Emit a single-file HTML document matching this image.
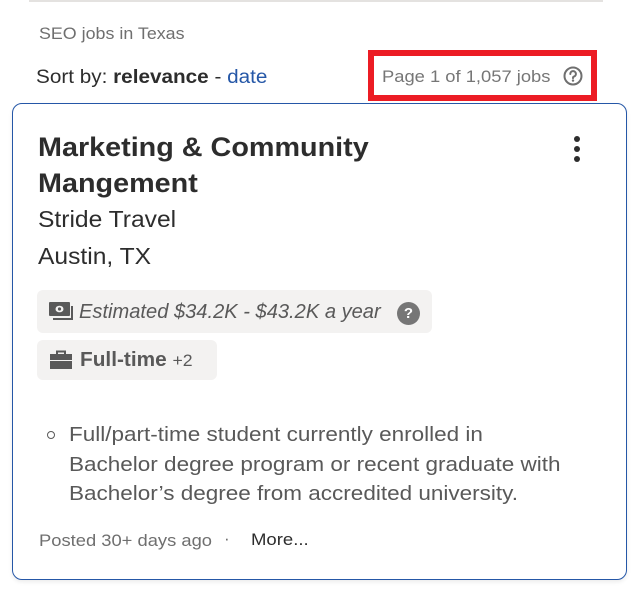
<!DOCTYPE html>
<html><head><meta charset="utf-8"><style>
*{margin:0;padding:0;box-sizing:border-box}
body{width:641px;height:594px;background:#fff;position:relative;overflow:hidden;font-family:"Liberation Sans","DejaVu Sans",sans-serif;color:#2d2d2d}
.a{position:absolute;white-space:nowrap;transform-origin:0 0}
</style></head><body>
<div class="a" style="left:29px;top:0;width:574px;height:2px;background:#e4e2e0"></div>
<div class="a" style="left:39px;top:24px;font-size:17px;color:#6f6f6f;transform:scaleX(1.05)">SEO jobs in Texas</div>
<div class="a" style="left:36px;top:67px;font-size:19px;color:#2d2d2d;transform:scaleX(1.09)">Sort by: <b>relevance</b> - <span style="color:#2557a7">date</span></div>
<div class="a" style="left:368px;top:50px;width:229px;height:51px;border:6px solid #ec1c24"></div>
<div class="a" style="left:382px;top:67px;font-size:17px;color:#767676;transform:scaleX(1.08)">Page 1 of 1,057 jobs</div>
<svg class="a" style="left:562px;top:65px" width="22" height="22" viewBox="0 0 22 22"><circle cx="11" cy="11" r="8.5" fill="none" stroke="#6f6f6f" stroke-width="2"/><path d="M8.3 9a2.8 2.8 0 1 1 3.6 2.6c-.7.3-.9.7-.9 1.5" fill="none" stroke="#6f6f6f" stroke-width="2" stroke-linecap="round"/><circle cx="11" cy="15.6" r="1.2" fill="#6f6f6f"/></svg>
<div class="a" style="left:12px;top:103px;width:615px;height:477px;border:1px solid #2557a7;border-radius:10px;box-shadow:0 2px 4px rgba(0,0,0,.08)"></div>
<div class="a" style="left:38px;top:129px;font-size:27px;font-weight:bold;line-height:36px;color:#2d2d2d;transform:scaleX(1.065)">Marketing &amp; Community<br>Mangement</div>
<div class="a" style="left:574px;top:136px;width:6px;height:6px;border-radius:50%;background:#2d2d2d"></div>
<div class="a" style="left:574px;top:146px;width:6px;height:6px;border-radius:50%;background:#2d2d2d"></div>
<div class="a" style="left:574px;top:156px;width:6px;height:6px;border-radius:50%;background:#2d2d2d"></div>
<div class="a" style="left:38px;top:204px;font-size:23px;line-height:30px;transform:scaleX(1.07)">Stride Travel</div>
<div class="a" style="left:38px;top:241px;font-size:23px;line-height:30px;transform:scaleX(1.07)">Austin, TX</div>
<div class="a" style="left:37px;top:290px;width:395px;height:43px;background:#f3f2f1;border-radius:6px"></div>
<svg class="a" style="left:49px;top:302px" width="25" height="20" viewBox="0 0 25 20"><rect x="0" y="0" width="21" height="14" rx="1" fill="#595959"/><ellipse cx="10.5" cy="7" rx="4" ry="3.3" fill="#f3f2f1"/><circle cx="10.5" cy="7" r="1.6" fill="#595959"/><path d="M23 4v13H4" fill="none" stroke="#595959" stroke-width="2"/></svg>
<div class="a" style="left:79px;top:301px;font-size:20px;font-style:italic;color:#595959;transform:scaleX(1.005)">Estimated $34.2K - $43.2K a year</div>
<div class="a" style="left:397px;top:302px;width:23px;height:23px;border-radius:50%;background:#767676;color:#fff;font-size:15px;font-weight:bold;text-align:center;line-height:23px">?</div>
<div class="a" style="left:37px;top:340px;width:180px;height:40px;background:#f3f2f1;border-radius:6px"></div>
<svg class="a" style="left:50px;top:350px" width="22" height="19" viewBox="0 0 22 19"><path d="M7 4V1.5h8V4" fill="none" stroke="#595959" stroke-width="2"/><rect x="0" y="4" width="22" height="6" fill="#595959"/><rect x="0" y="11" width="22" height="8" fill="#595959"/></svg>
<div class="a" style="left:80px;top:349px;font-size:20px;color:#595959;transform:scaleX(1.04)"><b>Full-time</b> <span style="font-size:17px">+2</span></div>
<div class="a" style="left:47px;top:431px;width:8px;height:8px;border:1.3px solid #595959;border-radius:50%"></div>
<div class="a" style="left:69px;top:421px;font-size:20px;line-height:29.6px;color:#595959;transform:scaleX(1.125)">Full/part-time student currently enrolled in<br>Bachelor degree program or recent graduate with<br>Bachelor’s degree from accredited university.</div>
<div class="a" style="left:39px;top:531px;font-size:17px;color:#6f6f6f;transform:scaleX(1.08)">Posted 30+ days ago</div>
<div class="a" style="left:224px;top:529px;font-size:17px;color:#6f6f6f">·</div>
<div class="a" style="left:251px;top:530px;font-size:17px;color:#2d2d2d;transform:scaleX(1.09)">More...</div>
</body></html>
